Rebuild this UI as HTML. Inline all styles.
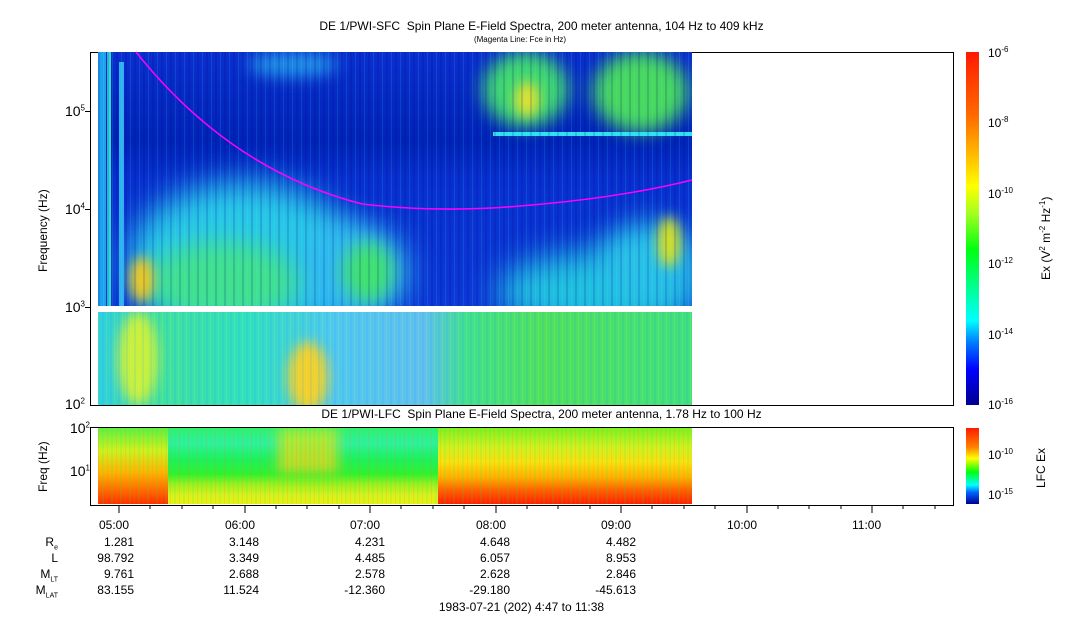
<!DOCTYPE html>
<html><head><meta charset="utf-8"><style>
body{margin:0;width:1083px;height:620px;background:#fff;position:relative;overflow:hidden;font-family:"Liberation Sans",sans-serif;color:#000}
.a{position:absolute}
.t{position:absolute;font-size:12px;white-space:nowrap}
.b{position:absolute;filter:blur(6px);border-radius:50%}
.r{text-align:right}
sup{font-size:8px}
sub{font-size:7px}
.t.r{line-height:16px}
</style></head><body>
<div class="t" style="left:0;width:1083px;top:19px;text-align:center">DE 1/PWI-SFC&nbsp; Spin Plane E-Field Spectra, 200 meter antenna, 104 Hz to 409 kHz</div>
<div class="t" style="left:0;width:1040px;top:35px;text-align:center;font-size:8px">(Magenta Line: Fce in Hz)</div>

<div class="a" style="left:90px;top:52px;width:862px;height:352px;border:1px solid #000"></div>
<div class="a" style="left:98px;top:52px;width:594px;height:254px;overflow:hidden;background:linear-gradient(#0a2fd0 0%,#0024b8 35%,#0830d0 50%,#0c38d8 100%)">
 <div class="b" style="left:30px;top:130px;width:230px;height:160px;background:#28c8e8;filter:blur(16px)"></div>
 <div class="b" style="left:200px;top:170px;width:110px;height:100px;background:#30b8f0;filter:blur(14px)"></div>
 <div class="b" style="left:50px;top:190px;width:150px;height:80px;background:#40e090;filter:blur(12px)"></div>
 <div class="b" style="left:32px;top:205px;width:24px;height:45px;background:#f0c820"></div>
 <div class="b" style="left:245px;top:190px;width:50px;height:60px;background:#40e070;filter:blur(9px)"></div>
 <div class="b" style="left:400px;top:200px;width:200px;height:80px;background:#20c0e0;filter:blur(16px)"></div>
 <div class="b" style="left:500px;top:170px;width:100px;height:80px;background:#28c0e8;filter:blur(14px)"></div>
 <div class="b" style="left:560px;top:165px;width:22px;height:50px;background:#d8e020"></div>
 <div class="b" style="left:385px;top:0px;width:85px;height:75px;background:#40d870;filter:blur(9px)"></div>
 <div class="b" style="left:495px;top:0px;width:95px;height:80px;background:#48d860;filter:blur(9px)"></div>
 <div class="b" style="left:417px;top:30px;width:24px;height:35px;background:#e0e030"></div>
 <div class="b" style="left:150px;top:0px;width:90px;height:25px;background:#2090e8;filter:blur(8px)"></div>
 <div class="a" style="left:0;top:0;width:8px;height:254px;background:#20a0f0"></div>
 <div class="a" style="left:9px;top:0;width:4px;height:254px;background:#30d8d0"></div>
 <div class="a" style="left:21px;top:10px;width:5px;height:244px;background:#30b0f0"></div>
 <div class="a" style="left:395px;top:80px;width:297px;height:4px;background:#30e0f0"></div>
 <div class="a" style="left:0;top:0;width:594px;height:254px;background:repeating-linear-gradient(90deg,rgba(0,0,120,.15) 0 2px,transparent 2px 5px,rgba(100,255,200,.12) 5px 6px,transparent 6px 9px)"></div>
</div>
<div class="a" style="left:98px;top:312px;width:594px;height:93px;overflow:hidden;background:linear-gradient(90deg,#30d0e0,#40e0a0 10%,#30e0c0 25%,#50c8f0 40%,#60c0f0 55%,#40e090 62%,#50e060 75%,#40e080 100%)">
 <div class="b" style="left:20px;top:0;width:40px;height:93px;background:#c8f040"></div>
 <div class="b" style="left:190px;top:30px;width:40px;height:70px;background:#f0d030"></div>
 <div class="a" style="left:0;top:0;width:594px;height:93px;background:repeating-linear-gradient(90deg,rgba(255,255,0,.12) 0 1px,transparent 1px 4px,rgba(0,150,255,.1) 4px 6px,transparent 6px 8px)"></div>
</div>
<svg class="a" style="left:0;top:0" width="1083" height="620"><path d="M136,52 Q230,170 362,204 Q440,213 520,206 Q620,198 692,180" fill="none" stroke="#ff00ff" stroke-width="1.5"/></svg>

<div class="t r" style="left:40px;width:45px;top:103px;font-size:14px;line-height:normal">10<sup>5</sup></div>
<div class="t r" style="left:40px;width:45px;top:201px;font-size:14px;line-height:normal">10<sup>4</sup></div>
<div class="t r" style="left:40px;width:45px;top:299px;font-size:14px;line-height:normal">10<sup>3</sup></div>
<div class="t r" style="left:40px;width:45px;top:396px;font-size:14px;line-height:normal">10<sup>2</sup></div>
<div class="t" style="left:36px;top:272px;transform:rotate(-90deg);transform-origin:0 0">Frequency (Hz)</div>
<div class="a" style="left:85px;top:111px;width:5px;height:1px;background:#000"></div>
<div class="a" style="left:85px;top:209px;width:5px;height:1px;background:#000"></div>
<div class="a" style="left:85px;top:307px;width:5px;height:1px;background:#000"></div>

<div class="a" style="left:966px;top:52px;width:13px;height:353px;background:linear-gradient(#ff1a00,#ff6a00 18%,#ffd000 32%,#ffff00 38%,#a0ff20 46%,#00ff10 56%,#00ffa0 68%,#00ffff 76%,#0080ff 82%,#0000ff 90%,#000090)"></div>
<div class="t" style="left:988px;top:45px">10<sup>-6</sup></div>
<div class="t" style="left:988px;top:115px">10<sup>-8</sup></div>
<div class="t" style="left:988px;top:186px">10<sup>-10</sup></div>
<div class="t" style="left:988px;top:256px">10<sup>-12</sup></div>
<div class="t" style="left:988px;top:327px">10<sup>-14</sup></div>
<div class="t" style="left:988px;top:397px">10<sup>-16</sup></div>
<div class="t" style="left:1038px;top:280px;transform:rotate(-90deg);transform-origin:0 0">Ex (V<sup>2</sup> m<sup>-2</sup> Hz<sup>-1</sup>)</div>

<div class="t" style="left:0;width:1083px;top:407px;text-align:center">DE 1/PWI-LFC&nbsp; Spin Plane E-Field Spectra, 200 meter antenna, 1.78 Hz to 100 Hz</div>
<div class="a" style="left:90px;top:427px;width:862px;height:77px;border:1px solid #000"></div>
<div class="a" style="left:98px;top:428px;width:594px;height:76px;overflow:hidden;background:linear-gradient(#30f070,#30f0a0 20%,#20f060 40%,#30f030 60%,#a0f020 75%,#d8f020 88%,#e8f010)">
 <div class="a" style="left:0;top:0;width:70px;height:76px;background:linear-gradient(#60f040,#d0f020 30%,#ffb000 60%,#ff3000)"></div>
 <div class="a" style="left:180px;top:0;width:60px;height:45px;background:linear-gradient(#c0f020,#f0d020);opacity:.8;filter:blur(6px)"></div>
 <div class="a" style="left:340px;top:0;width:254px;height:76px;background:linear-gradient(#80f020,#d0f020 25%,#f8e010 45%,#ffb000 65%,#ff6000 82%,#ff2000)"></div>
 <div class="a" style="left:0;top:0;width:594px;height:76px;background:repeating-linear-gradient(90deg,rgba(255,120,0,.15) 0 1px,transparent 1px 4px,rgba(0,255,80,.12) 4px 6px,transparent 6px 9px)"></div>
</div>
<div class="t r" style="left:40px;width:50px;top:420px;font-size:14px;line-height:normal">10<sup>2</sup></div>
<div class="t r" style="left:40px;width:50px;top:463px;font-size:14px;line-height:normal">10<sup>1</sup></div>
<div class="t" style="left:36px;top:492px;transform:rotate(-90deg);transform-origin:0 0">Freq (Hz)</div>
<div class="a" style="left:966px;top:428px;width:13px;height:76px;background:linear-gradient(#ff1a00,#ff8000 25%,#ffff00 40%,#00ff10 58%,#00ffff 75%,#0060ff 85%,#000090)"></div>
<div class="t" style="left:988px;top:447px">10<sup>-10</sup></div>
<div class="t" style="left:988px;top:487px">10<sup>-15</sup></div>
<div class="t" style="left:1034px;top:488px;transform:rotate(-90deg);transform-origin:0 0">LFC Ex</div>

<svg class="a" style="left:0;top:0" width="1083" height="620"><g stroke="#000">
<path d="M119,505v8M245,505v8M370,505v8M496,505v8M621,505v8M747,505v8M872,505v8M150,505v4M182,505v4M213,505v4M276,505v4M307,505v4M339,505v4M401,505v4M433,505v4M464,505v4M527,505v4M558,505v4M590,505v4M652,505v4M684,505v4M715,505v4M778,505v4M809,505v4M841,505v4M903,505v4M935,505v4"/></g></svg>
<div class="t" style="left:99px;top:518px">05:00</div>
<div class="t" style="left:225px;top:518px">06:00</div>
<div class="t" style="left:350px;top:518px">07:00</div>
<div class="t" style="left:476px;top:518px">08:00</div>
<div class="t" style="left:601px;top:518px">09:00</div>
<div class="t" style="left:727px;top:518px">10:00</div>
<div class="t" style="left:852px;top:518px">11:00</div>

<div class="t r" style="left:0;width:58px;top:534px">R<sub>e</sub></div>
<div class="t r" style="left:0;width:58px;top:550px">L</div>
<div class="t r" style="left:0;width:58px;top:566px">M<sub>LT</sub></div>
<div class="t r" style="left:0;width:58px;top:582px">M<sub>LAT</sub></div>
<div class="t r" style="left:70px;width:64px;top:534px">1.281<br>98.792<br>9.761<br>83.155</div>
<div class="t r" style="left:195px;width:64px;top:534px">3.148<br>3.349<br>2.688<br>11.524</div>
<div class="t r" style="left:321px;width:64px;top:534px">4.231<br>4.485<br>2.578<br>-12.360</div>
<div class="t r" style="left:446px;width:64px;top:534px">4.648<br>6.057<br>2.628<br>-29.180</div>
<div class="t r" style="left:572px;width:64px;top:534px">4.482<br>8.953<br>2.846<br>-45.613</div>
<div class="t" style="left:0;width:1043px;top:600px;text-align:center">1983-07-21 (202) 4:47 to 11:38</div>
</body></html>
